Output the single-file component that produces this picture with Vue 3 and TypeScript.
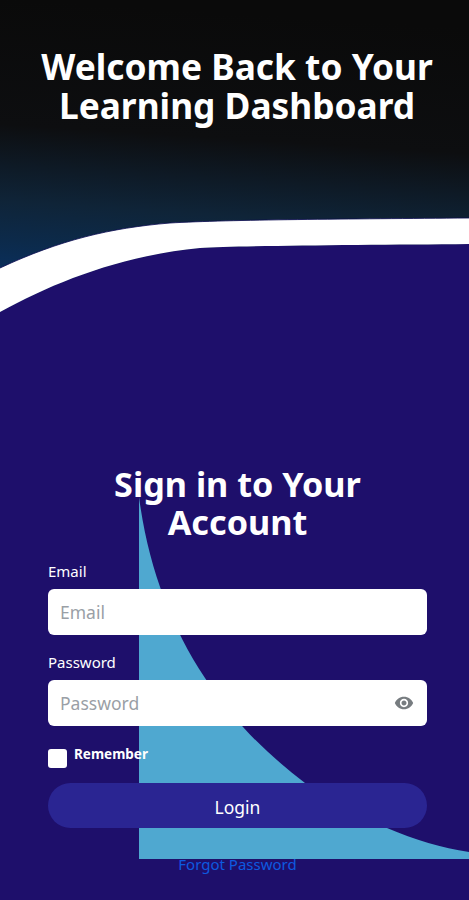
<script setup lang="ts">
import { ref } from 'vue'
const email = ref('')
const password = ref('')
const remember = ref(false)
</script>

<template>
  <div class="page">
    <svg class="bg" viewBox="0 0 469 900" width="469" height="900" aria-hidden="true">
      <defs>
        <linearGradient id="sky" gradientUnits="userSpaceOnUse" x1="20" y1="0" x2="0" y2="320">
          <stop offset="0" stop-color="#0a0a0a" />
          <stop offset="0.39" stop-color="#0d0e10" />
          <stop offset="0.52" stop-color="#0e1a26" />
          <stop offset="0.63" stop-color="#0f2438" />
          <stop offset="0.75" stop-color="#0c2a4a" />
          <stop offset="0.85" stop-color="#0a2f5c" />
        </linearGradient>
      </defs>
      <rect x="0" y="0" width="469" height="320" fill="url(#sky)" />
      <path d="M0 312C55 282 120 256 200 248C240 245.500 370 245 469 244V900H0Z" fill="#1e0f6b" />
      <path d="M0 268C60 240 110 228 170 223C230 219.500 350 219 469 218V244C370 245 240 245.500 200 248C120 256 55 282 0 312Z" fill="#fff" />
      <path d="M0 268C60 240 110 228 170 223C230 219.500 350 219 469 218" fill="none" stroke="#0a0a50" stroke-width="0.800" />
      <path d="M139 497C148 565 170 625 205 678C216 695 229 712 243 727C262 748 283 766 305 783C330 801 358 816 387 828C415 840 442 848 469 852V859H139Z" fill="#4fa8d0" />
    </svg>

    <header class="hero">
      <h1>Welcome Back to Your Learning Dashboard</h1>
    </header>

    <main class="panel">
      <h2>Sign in to Your Account</h2>
      <form class="form" @submit.prevent>
        <label class="field">
          <span>Email</span>
          <input v-model="email" type="email" placeholder="Email" />
        </label>
        <label class="field">
          <span>Password</span>
          <span class="pw">
            <input v-model="password" type="password" placeholder="Password" />
            <svg class="eye" viewBox="0 0 24 24" width="20" height="20" aria-hidden="true">
              <path d="M12 4.500C7 4.500 2.730 7.610 1 12c1.730 4.390 6 7.500 11 7.500s9.270-3.110 11-7.500c-1.730-4.390-6-7.500-11-7.500zM12 17c-2.760 0-5-2.240-5-5s2.240-5 5-5 5 2.240 5 5-2.240 5-5 5zm0-8c-1.660 0-3 1.340-3 3s1.340 3 3 3 3-1.340 3-3-1.340-3-3-3z" fill="#777c80" />
            </svg>
          </span>
        </label>
        <label class="remember">
          <input v-model="remember" type="checkbox" />
          <span>Remember</span>
        </label>
        <button type="submit">Login</button>
      </form>
      <a class="forgot" href="#">Forgot Password</a>
    </main>
  </div>
</template>

<style>
html, body { margin: 0; background: #1e0f6b; }
</style>

<style scoped>
.page {
  position: relative;
  width: 469px;
  height: 900px;
  overflow: hidden;
  font-family: "Noto Sans", sans-serif;
  color: #fff;
}
.bg { position: absolute; inset: 0; display: block; }
.hero {
  position: relative;
  height: 465px;
  padding: 47px 30px 0 35px;
  box-sizing: border-box;
}
h1 {
  margin: 0;
  font-size: 35.300px;
  line-height: 39px;
  font-weight: 700;
  text-align: center;
}
.panel {
  position: relative;
  padding: 0 42px 0 48px;
  display: flex;
  flex-direction: column;
}
h2 {
  margin: 0 auto 20px;
  width: 300px;
  font-size: 34.200px;
  line-height: 38px;
  font-weight: 700;
  text-align: center;
}
.form { display: flex; flex-direction: column; }
.field {
  display: flex;
  flex-direction: column;
  gap: 8px;
  font-size: 15px;
  line-height: 20px;
  margin-bottom: 17px;
}
.pw { position: relative; display: block; }
input:not([type="checkbox"]) {
  width: 100%;
  height: 46px;
  box-sizing: border-box;
  border: 0;
  border-radius: 6px;
  padding: 0 12px;
  background: #fff;
  font: 17.500px "Noto Sans", sans-serif;
  outline: none;
}
input::placeholder { color: #9a9fa6; opacity: 1; }
.eye { position: absolute; right: 13px; top: 13px; }
.remember {
  display: flex;
  align-items: flex-start;
  gap: 7px;
  margin-top: 3px;
  font-size: 13.500px;
  line-height: 16px;
  font-weight: 700;
}
.remember input {
  appearance: none;
  width: 19px;
  height: 19px;
  margin: 3px 0 0;
  background: #fff;
  border-radius: 3px;
}
button {
  margin-top: 15px;
  height: 45px;
  border: 0;
  border-radius: 23px;
  background: #2a2592;
  color: #fff;
  font: 17.500px "Noto Sans", sans-serif;
  padding: 2px 0 0 0;
}
.forgot {
  margin-top: 26px;
  text-align: center;
  color: #0d5ae0;
  font-size: 15px;
  line-height: 20px;
  text-decoration: none;
}
</style>
